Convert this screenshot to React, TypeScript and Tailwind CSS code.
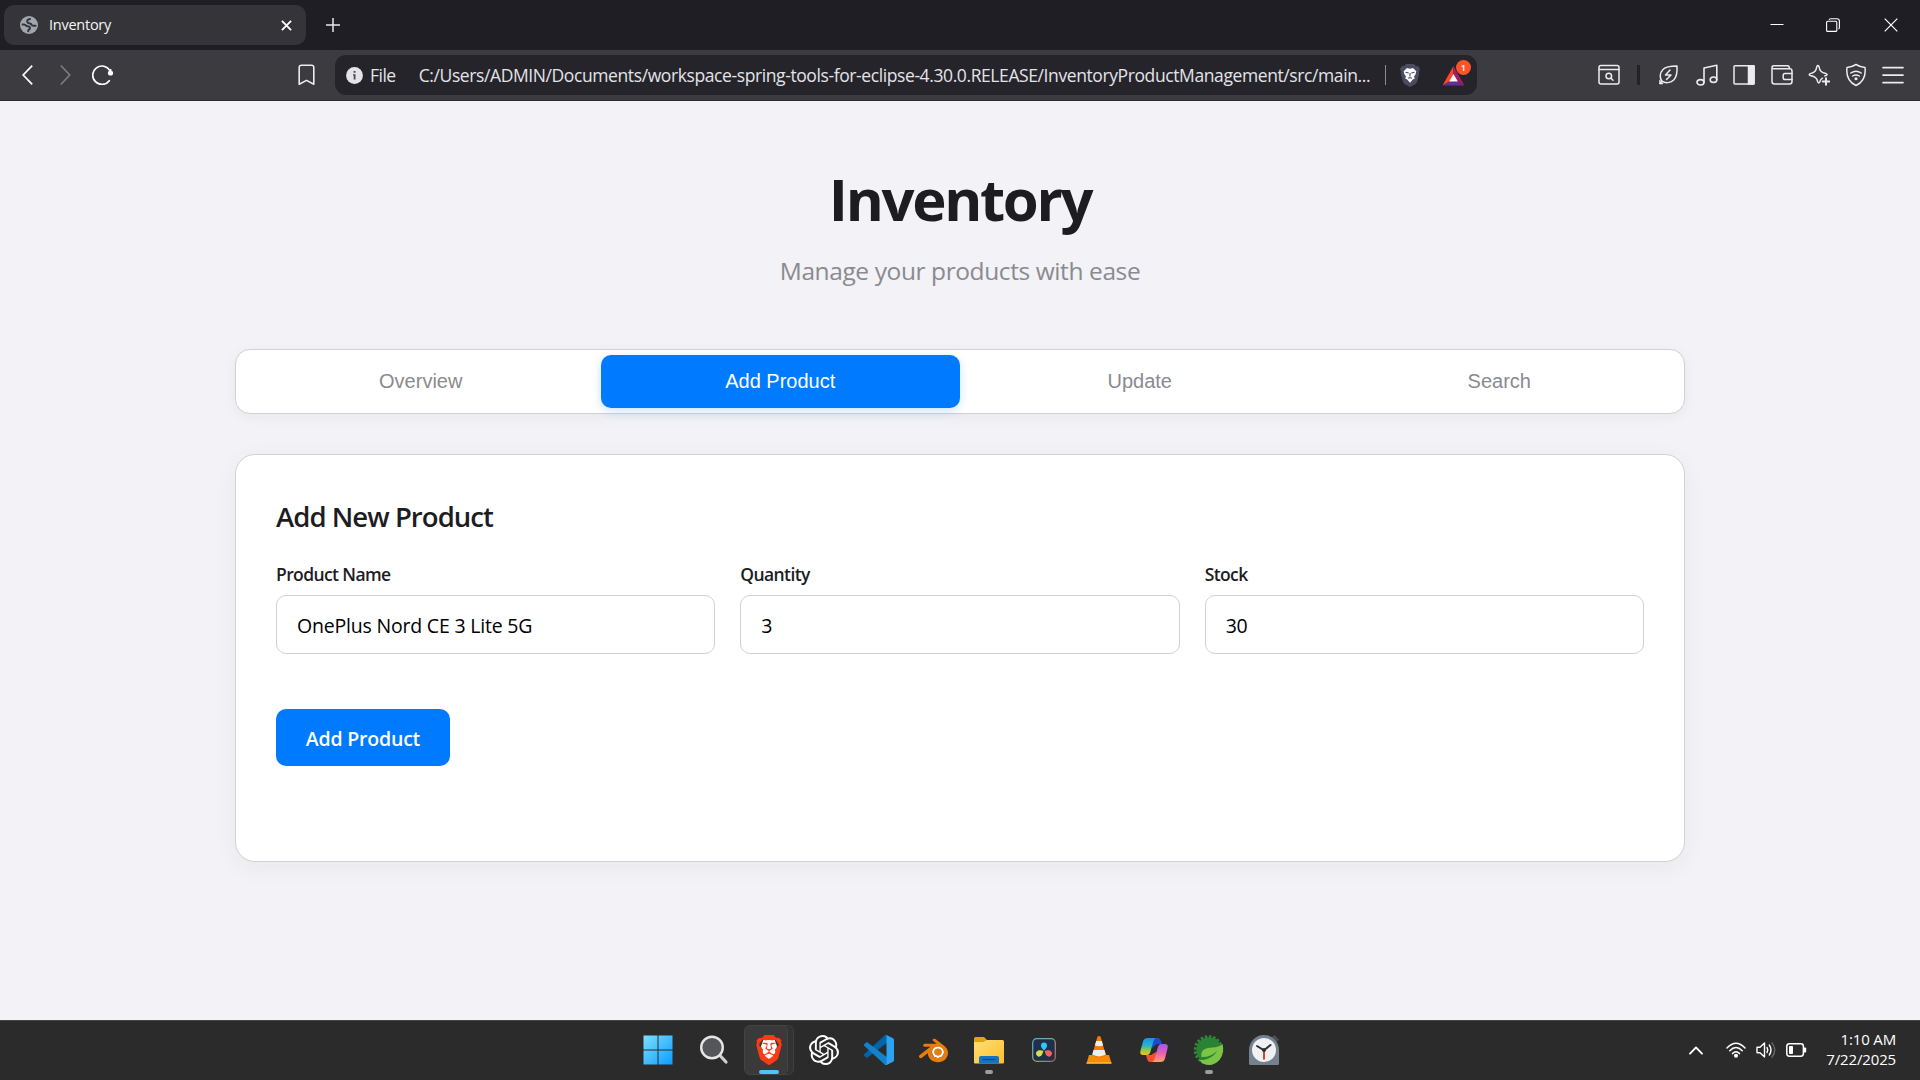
import React from "react";
import { SiBrave, SiOpenai, SiBlender } from "react-icons/si";

/* ---------- browser chrome ---------- */

function Globe() {
  return (
    <svg viewBox="0 0 18 18" className="h-[18px] w-[18px]">
      <circle cx="9" cy="9" r="9" fill="#a0a6ad" />
      <g fill="none" stroke="#353439" strokeWidth="2" strokeLinecap="round" strokeLinejoin="round">
        <path d="M10 3Q6.800 3.600 7.200 5.700 7.600 7.200 10 7.400q1 .2 1.400 1.200.5 1.200 2 1.200h2.200" />
        <path d="M2.600 8.600q2.800-.4 3.700 1.300 3.700.2 3.700 2-.1 1.500-1.600 2.300l-.2 1" />
      </g>
    </svg>
  );
}

function TabStrip() {
  return (
    <div className="flex h-[50px] w-full items-center bg-[#1f1e24]">
      <div className="ml-1 flex h-10 w-[302px] items-center rounded-[10px] bg-[#353439] pr-[14px] pl-4">
        <Globe />
        <span className="ml-[11px] text-[14.500px] leading-5 tracking-[-0.25px] text-[#f4f4f6]">Inventory</span>
        <svg viewBox="0 0 12 12" className="ml-auto h-[11px] w-[11px]" stroke="#fff" strokeWidth="2" fill="none">
          <path d="M1 1l10 10M11 1L1 11" />
        </svg>
      </div>
      <svg viewBox="0 0 14 14" className="ml-5 h-3.5 w-3.5" stroke="#e8e8ea" strokeWidth="1.500" fill="none">
        <path d="M7 0v14M0 7h14" />
      </svg>
      <div className="ml-auto flex items-center pr-[22px] pb-px">
        <svg viewBox="0 0 14 14" className="h-3.5 w-3.5" stroke="#fff" strokeWidth="1" fill="none">
          <path d="M.5 6.500h13" />
        </svg>
        <svg viewBox="0 0 14 14" className="ml-[42px] h-3.5 w-3.5" stroke="#fff" strokeWidth="1.100" fill="none">
          <rect x=".6" y="3.200" width="10.200" height="10.200" rx="1" />
          <path d="M3 1.800Q3.300.7 4.800.7H11q2.400 0 2.400 2.400v6.400q0 1.200-1 1.600" />
        </svg>
        <svg viewBox="0 0 14 14" className="ml-[44px] h-3.5 w-3.5" stroke="#fff" strokeWidth="1.200" fill="none">
          <path d="M.7.7l12.600 12.600M13.300.7L.7 13.300" />
        </svg>
      </div>
    </div>
  );
}

function BatLogo() {
  return (
    <div className="relative mb-[5px] ml-[22px] h-[25px] w-[30px]">
      <svg viewBox="0 0 22 20" className="mt-[6px] h-5 w-[23px]">
        <path d="M11 0L0 19.500l7.200-4.200L11 8.500z" fill="#ff4724" />
        <path d="M0 19.500h22l-7.200-4.200H7.200z" fill="#662d91" />
        <path d="M11 0l11 19.500-7.200-4.200L11 8.500z" fill="#9e1f63" />
        <path d="M11 8l4.300 7.600H6.700z" fill="#fff" />
      </svg>
      <span className="absolute top-0 left-[14px] flex h-[15px] w-[15px] items-center justify-center rounded-full bg-[#fb542b] text-[9px] leading-none font-semibold text-white">
        1
      </span>
    </div>
  );
}

function AddressBar() {
  return (
    <div className="ml-5 flex h-10 w-[1142px] items-center rounded-[11px] bg-[#25242a] pl-[11px]">
      <svg viewBox="0 0 17 17" className="mt-px h-[17px] w-[17px]">
        <circle cx="8.500" cy="8.500" r="8.400" fill="#e3e3e8" />
        <path d="M7.600 4h1.900v1.800H7.600zM7 7.200h2.500V12.500H7.700V8.400H7z" fill="#4a494f" />
      </svg>
      <span className="mb-px ml-[7px] text-[17.500px] leading-6 tracking-[-0.5px] text-[#e3e3e8]">File</span>
      <span className="mb-px ml-[23px] w-[951px] text-[17.500px] leading-6 tracking-[-0.4px] whitespace-nowrap text-[#e3e3e8]">
        C:/Users/ADMIN/Documents/workspace-spring-tools-for-eclipse-4.30.0.RELEASE/InventoryProductManagement/src/main...
      </span>
      <span className="ml-[15px] h-5 w-px bg-[#8b8a91]" />
      <svg viewBox="0 0 20 23" className="ml-[14px] h-[23px] w-5">
        <path d="M6 0h8l2 2.300 2.200-.2L20 5l-1 3 .3 1.500L17 18q-.4 1.200-1.500 2L10 23l-5.500-3Q3.400 19.200 3 18L.7 9.500 1 8 0 5l1.800-2.900 2.200.2z" fill="#4a4b5f" />
        <path d="M7 4l3 .7 3-.7 3.300 3.200-.7 3-1.600 2.200.8 2.200-2 .8L10 18.800l-2.800-3.400-2-.8.8-2.200-1.600-2.200-.7-3z" fill="#fff" />
        <path d="M5.500 8.200l3.200.8M14.500 8.200l-3.200.8M8 14.300l2-.8 2 .8M10 9v3.500" stroke="#4a4b5f" strokeWidth="1.100" fill="none" />
      </svg>
      <BatLogo />
    </div>
  );
}

function ToolbarIcons() {
  const stroke = { fill: "none", stroke: "#ececef", strokeWidth: 1.5, strokeLinecap: "round" as const, strokeLinejoin: "round" as const };
  return (
    <div className="ml-auto flex items-center pr-[16px]">
      <svg viewBox="0 0 22 22" className="h-[22px] w-[22px]" {...stroke}>
        <rect x="1" y="1.500" width="20" height="18.500" rx="2" />
        <path d="M1 5.500h20" />
        <circle cx="10.800" cy="12" r="2.800" />
        <path d="M13 14.200l2 2" />
      </svg>
      <span className="ml-[17px] h-5 w-[3px] bg-[#232227]" />
      <svg viewBox="0 0 22 22" className="ml-[18px] h-[22px] w-[22px]" {...stroke}>
        <path d="M2 19.500l2-2.300C1.500 14 1.500 9 5 5.500 8 2.400 13 2 19 2c.3 5.500-.2 11-3.300 14-3.400 3.300-8.700 3.300-11.700 1.200" />
        <path d="M2 16.500v3h2.500M12 6L7.500 11H13l-4.500 4.500" />
      </svg>
      <svg viewBox="0 0 22 22" className="ml-[16px] h-[22px] w-[22px]" {...stroke} strokeWidth={1.6}>
        <ellipse cx="4.500" cy="18.300" rx="3.500" ry="2.700" />
        <ellipse cx="17.500" cy="15.700" rx="3.300" ry="2.700" />
        <path d="M8 18.300V4l12.800-2.800v14.500" />
      </svg>
      <svg viewBox="0 0 22 22" className="ml-[15px] h-[22px] w-[22px]" {...stroke}>
        <rect x="1" y="1.800" width="20" height="18.200" rx="1" />
        <rect x="15.500" y="1.800" width="5.500" height="18.200" fill="#ececef" />
      </svg>
      <svg viewBox="0 0 22 22" className="ml-[16px] h-[22px] w-[22px]" {...stroke}>
        <path d="M1 4.500V17.500Q1 20 3.500 20h15q2.500 0 2.500-2.500V7Q21 4.800 18.500 4.800H3.200Q1 4.800 1 3.300 1 1.800 3 1.800h13.500q1.800 0 2 2.800" />
        <path d="M21 9.500h-7q-1.800 0-1.800 1.800v2.400q0 1.800 1.800 1.800h7" />
      </svg>
      <svg viewBox="0 0 22 22" className="ml-[15px] h-[22px] w-[22px]" {...stroke}>
        <path d="M14.500 14.200c-1.800 1-2.200 1.800-2.800 3.800q-.9 2-1.900 0C8.800 14 7.500 12.800 2.300 11.500q-2.200-1 0-1.900C7 8.300 8 7 8.900 2.400q1-2 2 0C11.800 7 13 8.300 18 9.600q2.200 1 0 1.900l-1.200.4" />
        <path d="M18 14.300v6.400M14.800 17.500h6.400" strokeWidth="2" />
      </svg>
      <svg viewBox="0 0 22 24" className="ml-[15px] h-6 w-[22px]" {...stroke}>
        <path d="M11 1.500Q15 4 20 4.500C21 13 18.500 19 11 22.500 3.500 19 1 13 2 4.500Q7 4 11 1.500z" />
        <path d="M5.800 10q5.200-3.600 10.400 0M7.700 13q3.300-2.200 6.600 0" />
        <circle cx="11" cy="15.800" r=".8" fill="#ececef" />
      </svg>
      <svg viewBox="0 0 22 22" className="ml-[15px] h-[22px] w-[22px]" {...stroke} strokeWidth={1.7}>
        <path d="M1 3.600h20M1 11.100h20M1 18.600h20" />
      </svg>
    </div>
  );
}

function Toolbar() {
  return (
    <div className="flex h-[51px] w-full items-center border-b border-[#2c2b30] bg-[#3c3b40] pl-[22px]">
      <svg viewBox="0 0 11 20" className="h-5 w-[11px]" fill="none" stroke="#fff" strokeWidth="1.700">
        <path d="M10.200.6L1.200 10l9 9.400" />
      </svg>
      <svg viewBox="0 0 11 20" className="ml-[27px] h-5 w-[11px]" fill="none" stroke="#808085" strokeWidth="1.500">
        <path d="M.8.6l9 9.400-9 9.400" />
      </svg>
      <svg viewBox="0 0 22 20" className="ml-[21px] h-5 w-[22px]" fill="none" stroke="#fff" strokeWidth="1.700">
        <path d="M18 5.800A9.200 9.200 0 1 0 17.300 15.700" strokeLinecap="round" />
        <circle cx="18.500" cy="8" r="2.600" fill="#fff" stroke="none" />
        <path d="M18.500 4v4" />
      </svg>
      <svg viewBox="0 0 17 22" className="ml-[184px] h-[22px] w-[17px]" fill="none" stroke="#ececef" strokeWidth="1.600" strokeLinejoin="round">
        <path d="M3.500 1.300h10q2.300 0 2.300 2.200V20.300l-7.300-3.900-7.300 3.900V3.500q0-2.200 2.300-2.200z" />
      </svg>
      <AddressBar />
      <ToolbarIcons />
    </div>
  );
}

/* ---------- page ---------- */

const tabs = ["Overview", "Add Product", "Update", "Search"];
const fields = [
  { label: "Product Name", value: "OnePlus Nord CE 3 Lite 5G" },
  { label: "Quantity", value: "3" },
  { label: "Stock", value: "30" },
];

function Page() {
  return (
    <main className="flex h-[919px] flex-col items-center bg-[#f2f2f7] pt-[62px]">
      <h1 className="h-[72px] text-[58px] leading-[72px] font-bold tracking-[-2.300px] text-[#1d1d1f]">Inventory</h1>
      <p className="mt-[18px] text-[24.500px] leading-9 tracking-[-0.4px] text-[#8a8a8f]">Manage your products with ease</p>

      <nav className="mt-[60px] grid h-[65px] w-[1450px] grid-cols-4 rounded-[15px] border border-[#d1d1d6] bg-white p-[5px] font-['Liberation_Sans',Arial,sans-serif] shadow-[0_3px_13px_rgba(0,0,0,0.05)]">
        {tabs.map((t) => (
          <button
            key={t}
            className={
              t === "Add Product"
                ? "h-[53px] rounded-[10px] bg-[#007aff] pb-0.5 text-[20px] text-white shadow-[0_3px_10px_rgba(0,122,255,0.2)]"
                : "h-[53px] rounded-[10px] pb-0.5 text-[20px] text-[#8a8a8f]"
            }
          >
            {t}
          </button>
        ))}
      </nav>

      <section className="mt-10 h-[408px] w-[1450px] rounded-[20px] border border-[#d1d1d6] bg-white px-10 pt-[45px] shadow-[0_5px_25px_rgba(0,0,0,0.05)]">
        <h2 className="text-[27.500px] leading-[34px] font-semibold tracking-[-0.950px] text-[#1d1d1f]">Add New Product</h2>
        <div className="mt-7 grid grid-cols-3 gap-[25px]">
          {fields.map((f) => (
            <label key={f.label} className="flex flex-col">
              <span className="text-[17.500px] leading-6 font-semibold tracking-[-0.6px] text-[#1d1d1f]">{f.label}</span>
              <input
                readOnly
                value={f.value}
                className="mt-[9px] h-[59px] w-full rounded-[10px] border border-[#d1d1d6] bg-white px-5 pt-px text-[19.500px] tracking-[-0.2px] text-black outline-none"
              />
            </label>
          ))}
        </div>
        <button className="mt-[55px] h-[57px] w-[174px] rounded-[10px] bg-[#007aff] pt-0.5 text-[19.500px] font-semibold tracking-[-0.2px] text-white">
          Add Product
        </button>
      </section>
    </main>
  );
}

/* ---------- taskbar ---------- */

function WindowsIcon() {
  return (
    <svg viewBox="0 0 30 30" className="mr-[2px] h-[30px] w-[30px]">
      <defs>
        <linearGradient id="win" gradientUnits="userSpaceOnUse" x1="0" y1="0" x2="30" y2="30">
          <stop offset="0" stopColor="#7fe0ff" />
          <stop offset="1" stopColor="#0a9bff" />
        </linearGradient>
      </defs>
      <path d="M.5.5h14v14H.5zM15.500.5h14v14h-14zM.5 15.500h14v14H.5zM15.500 15.500h14v14h-14z" fill="url(#win)" />
    </svg>
  );
}

function SearchIcon() {
  return (
    <svg viewBox="0 0 30 30" className="h-[30px] w-[30px]">
      <path d="M20.500 20l6.500 7" stroke="#cfd0d3" strokeWidth="3.200" strokeLinecap="round" />
      <circle cx="13" cy="12.500" r="10.800" fill="#55565a" stroke="#e6e6e8" strokeWidth="2.400" />
    </svg>
  );
}

function BraveIcon() {
  return (
    <span className="relative flex h-[30px] w-[30px] items-center justify-center">
      <svg viewBox="0 0 30 32" className="absolute h-[30px] w-[28px]">
        <path d="M9 5h12l2.500 7-3 12-5.500 4-5.500-4-3-12z" fill="#fff" />
      </svg>
      <SiBrave className="relative h-[30px] w-[30px] text-[#fb3b14]" />
    </span>
  );
}

function VsCodeIcon() {
  return (
    <svg viewBox="0 0 100 100" className="h-[30px] w-[30px]">
      <path d="M96.500 10.700L75.900.8a6.200 6.200 0 0 0-7.100 1.200L1.300 63.500a4.200 4.200 0 0 0 0 6.200l5.500 5a4.200 4.200 0 0 0 5.400.2L93.400 13.300c2.700-2 6.600-.1 6.600 3.300v-.2a6.300 6.300 0 0 0-3.500-5.700z" fill="#0065a9" />
      <path d="M96.500 89.300l-20.600 9.900a6.200 6.200 0 0 1-7.100-1.200L1.300 36.500a4.200 4.200 0 0 1 0-6.200l5.500-5a4.200 4.200 0 0 1 5.400-.2l81.200 61.600c2.700 2 6.600.1 6.600-3.300v.2a6.300 6.300 0 0 1-3.500 5.700z" fill="#1482c9" />
      <path d="M75.900 99.200a6.200 6.200 0 0 1-7.100-1.200c2.300 2.300 6.200.7 6.200-2.600V4.600c0-3.300-3.900-4.900-6.200-2.600a6.200 6.200 0 0 1 7.100-1.200l20.600 9.900a6.200 6.200 0 0 1 3.500 5.700v67.200a6.200 6.200 0 0 1-3.500 5.700z" fill="#2ba3f1" />
    </svg>
  );
}

function BlenderIcon() {
  return (
    <span className="relative flex h-[30px] w-[30px] items-center justify-center">
      <svg viewBox="0 0 30 30" className="absolute h-[30px] w-[30px]">
        <circle cx="19" cy="17" r="6" fill="#fff" />
        <circle cx="19" cy="17" r="3.300" fill="#265787" />
      </svg>
      <SiBlender className="relative h-[29px] w-[29px] text-[#e87d0d]" />
    </span>
  );
}

function FolderIcon() {
  return (
    <svg viewBox="0 0 30 30" className="h-[30px] w-[30px]">
      <defs>
        <linearGradient id="fold" x1="0" y1="0" x2="1" y2="1">
          <stop offset="0" stopColor="#ffdf78" />
          <stop offset="1" stopColor="#fdbf2a" />
        </linearGradient>
      </defs>
      <path d="M0 3.500Q0 2 1.500 2H10l3 3v4H0z" fill="#e2a30e" />
      <path d="M0 7h9.500L13 5h15.500Q30 5 30 6.500V27.500Q30 28.500 29 28.500H1Q0 28.500 0 27.500z" fill="url(#fold)" />
      <path d="M5 28.500V23q0-2 2-2h16q2 0 2 2v5.500z" fill="#1274c6" />
      <path d="M8.500 24.500h13" stroke="#0b4b8c" strokeWidth="1.200" />
    </svg>
  );
}

function ResolveIcon() {
  return (
    <svg viewBox="0 0 24 24" className="h-6 w-6">
      <defs>
        <linearGradient id="dvr" x1="0" y1="0" x2="1" y2="1">
          <stop offset="0" stopColor="#46b7d8" />
          <stop offset=".5" stopColor="#8fa37b" />
          <stop offset="1" stopColor="#e2504f" />
        </linearGradient>
      </defs>
      <rect x=".7" y=".7" width="22.600" height="22.600" rx="4" fill="#20304a" stroke="url(#dvr)" strokeWidth="1.200" />
      <path d="M12 12.500C9 9.500 9 8.300 9 7.500a3 3 0 0 1 6 0c0 .8 0 2-3 5z" fill="#35c5f4" />
      <path d="M11.300 13c-1 4-2 4.700-2.700 5.100a3 3 0 0 1-3-5.200c.7-.4 1.800-1 5.700.1z" fill="#d6e04a" />
      <path d="M12.700 13c1 4 2 4.700 2.700 5.100a3 3 0 0 0 3-5.200c-.7-.4-1.800-1-5.700.1z" fill="#f0665c" />
    </svg>
  );
}

function VlcIcon() {
  return (
    <svg viewBox="0 0 30 30" className="h-[30px] w-[30px]">
      <path d="M5 20h20l2.500 8.500h-25z" fill="#f58a0b" />
      <path d="M2.900 27h24.200l.5 1.800H2.400z" fill="#ffb21e" />
      <path d="M13.500 1.500q1.500-1 3 0L22 20.500q-7 4-14 0z" fill="#f57c00" />
      <path d="M12.200 6h5.600l1.300 4.500q-4.100 1.500-8.200 0zM9.600 15h10.800l1.400 4.600q-6.800 3.600-13.600 0z" fill="#eceff1" />
    </svg>
  );
}

function CopilotIcon() {
  return (
    <svg viewBox="0 0 30 30" className="h-[30px] w-[30px]">
      <defs>
        <linearGradient id="cpa" x1="0" y1="0" x2="0" y2="1">
          <stop offset="0" stopColor="#1b8ef2" />
          <stop offset=".45" stopColor="#27b7c4" />
          <stop offset=".75" stopColor="#9ccb3d" />
          <stop offset="1" stopColor="#f5c21b" />
        </linearGradient>
        <linearGradient id="cpb" x1="0" y1="0" x2="0" y2="1">
          <stop offset="0" stopColor="#9a5cf0" />
          <stop offset=".5" stopColor="#e85fb4" />
          <stop offset="1" stopColor="#ff9f6b" />
        </linearGradient>
      </defs>
      <path d="M11 3h8q2 0 2.800 2.500L23 9h-5l-5 4z" fill="#1a4bd0" />
      <path d="M19 27h-8q-2 0-2.800-2.500L7 20h5l5-3z" fill="#f4502e" />
      <path d="M8.500 3H17q-1.800.5-2.500 3l-3.300 11.500Q10.300 20 8 20H4q-3.500 0-2.600-4L4 6.500Q5 3 8.500 3z" fill="url(#cpa)" />
      <path d="M21.500 27H13q1.800-.5 2.500-3l3.300-11.500Q19.700 9 22 9h4q3.500 0 2.600 4L26 23.500Q25 27 21.500 27z" fill="url(#cpb)" />
    </svg>
  );
}

function SpringIcon() {
  return (
    <svg viewBox="0 0 30 30" className="h-[30px] w-[30px]">
      <circle cx="14.500" cy="15" r="13.300" fill="none" stroke="#2f8a35" strokeWidth="3" strokeDasharray="2.500 1.680" />
      <circle cx="15" cy="15" r="12.700" fill="#2b8234" />
      <path d="M28.500 9C31 18 26 29.500 15.500 29.900 10 30 6.800 27.500 5.500 25c7 .5 13-2 18-9.500-5 4.800-10 6.800-16 6.500C6 15 12 12.800 18 12.500c5-.2 8-1 10.500-3.500z" fill="#7cc544" />
    </svg>
  );
}

function ClockIcon() {
  return (
    <svg viewBox="0 0 30 30" className="h-[30px] w-[30px]">
      <path d="M23 2l2.500-2L30 4.500 27.500 7z" fill="#4b4f52" />
      <path d="M0 15a15 15 0 0 1 30 0v13.500q0 1.500-1.500 1.500h-27Q0 30 0 28.500z" fill="#74828f" />
      <circle cx="15" cy="15" r="12" fill="#eff1f3" />
      <path d="M15 15v9.500" stroke="#e0451c" strokeWidth="2" />
      <path d="M8 11l7 4.300L21.500 10" fill="none" stroke="#2c3136" strokeWidth="2" strokeLinecap="round" />
      <circle cx="15" cy="15" r="2" fill="#2c3136" />
    </svg>
  );
}

const apps = [
  { name: "start", icon: <WindowsIcon /> },
  { name: "search", icon: <SearchIcon /> },
  { name: "brave", icon: <BraveIcon />, state: "active" },
  { name: "chatgpt", icon: <SiOpenai className="h-[30px] w-[30px] text-white" /> },
  { name: "vscode", icon: <VsCodeIcon /> },
  { name: "blender", icon: <BlenderIcon /> },
  { name: "explorer", icon: <FolderIcon />, state: "running" },
  { name: "resolve", icon: <ResolveIcon /> },
  { name: "vlc", icon: <VlcIcon /> },
  { name: "copilot", icon: <CopilotIcon /> },
  { name: "spring", icon: <SpringIcon />, state: "running" },
  { name: "clock", icon: <ClockIcon /> },
];

function Taskbar() {
  return (
    <footer className="flex h-[60px] w-full border-t border-[#454545] bg-[#2b2b2b] pl-[631px]">
      <div className="flex h-[58px] items-center">
        {apps.map((a) => (
          <div key={a.name} className="relative flex h-[50px] w-[55px] items-center justify-center">
            {a.state === "active" && (
              <>
                <span className="absolute top-0 left-[10px] h-[50px] w-[43px] rounded-md border border-[#404040] bg-[#323232]" />
                <span className="absolute top-0 left-[3px] h-[50px] w-[44px] rounded-md border border-[#444] bg-[#3a3a3a]" />
                <span className="absolute bottom-[1px] left-[18px] h-1 w-5 rounded-full bg-[#4cc2ff]" />
              </>
            )}
            {a.state === "running" && <span className="absolute bottom-[1px] left-6 h-1 w-2 rounded-full bg-[#9d9d9d]" />}
            <span className="relative">{a.icon}</span>
          </div>
        ))}
      </div>

      <div className="ml-auto flex h-[58px] items-center pr-6 text-white">
        <svg viewBox="0 0 14 9" className="h-[9px] w-3.5" fill="none" stroke="#fff" strokeWidth="1.800" strokeLinecap="round" strokeLinejoin="round">
          <path d="M1 7.700L7 1.500l6 6.200" />
        </svg>
        <svg viewBox="0 0 20 16" className="ml-[23px] h-4 w-5" fill="none" stroke="#fff" strokeWidth="1.500" strokeLinecap="round">
          <path d="M1 6q9-9.600 18 0M3.800 8.800q6.200-6.400 12.400 0M6.500 11.600q3.500-3.600 7 0" />
          <circle cx="10" cy="13.700" r="1.300" fill="#fff" />
        </svg>
        <svg viewBox="0 0 21 18" className="ml-[10px] h-[18px] w-[21px]" fill="none" stroke="#fff" strokeWidth="1.400" strokeLinecap="round" strokeLinejoin="round">
          <path d="M1 6.200h3L8.500 2v14L4 11.800H1z" />
          <path d="M11 6.500q1.600 2.500 0 5M13.300 4q3.400 5 0 10" />
          <path d="M16 1.800q5.500 7.200 0 14.400" stroke="#686868" />
        </svg>
        <svg viewBox="0 0 21 14" className="ml-[9px] h-3.5 w-[21px]" fill="none" stroke="#fff" strokeWidth="1.500">
          <rect x=".8" y=".8" width="16.600" height="12.400" rx="2.600" />
          <rect x="3" y="3" width="4" height="8" rx=".8" fill="#fff" stroke="none" />
          <path d="M18 4.500h1.200q1 0 1 1v3q0 1-1 1H18z" fill="#fff" stroke="none" />
        </svg>
        <div className="mb-[2px] ml-[19px] flex w-[70px] flex-col items-end text-[15px] leading-5 tracking-[-0.15px] whitespace-nowrap">
          <span>1:10 AM</span>
          <span>7/22/2025</span>
        </div>
      </div>
    </footer>
  );
}

export default function App() {
  return (
    <div className="flex h-[1080px] w-[1920px] flex-col overflow-hidden font-['Open_Sans','Noto_Sans',sans-serif]">
      <TabStrip />
      <Toolbar />
      <Page />
      <Taskbar />
    </div>
  );
}
